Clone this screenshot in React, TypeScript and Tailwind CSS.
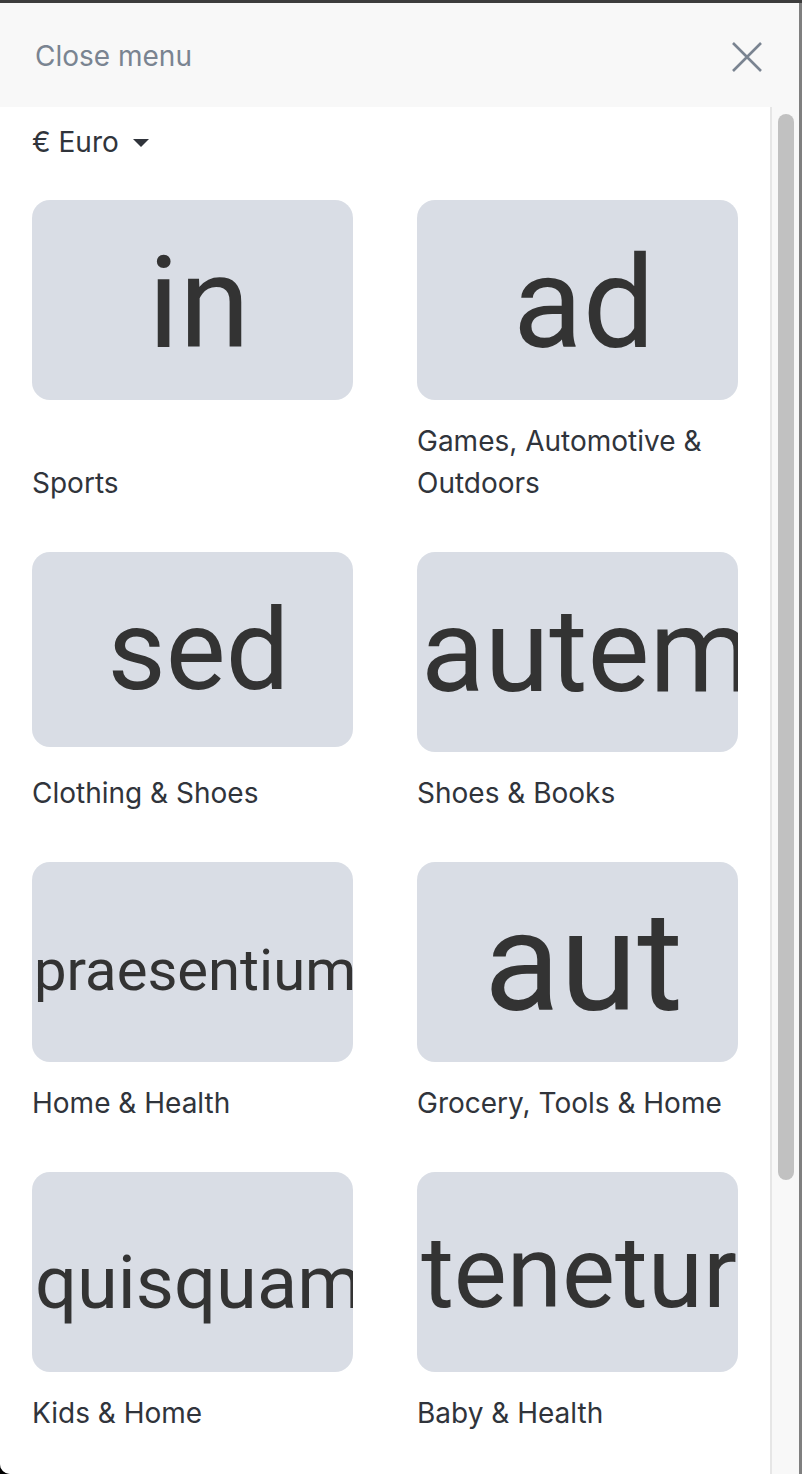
type Category = {
    word: string;
    label: string;
    size: string;
    height: string;
    // nudges the placeholder word the way the source images sit it
    offset: string;
};

const categories: Category[] = [
    { word: 'in', label: 'Sports', size: 'text-[128px]', height: 'h-[200px]', offset: 'pl-[13px] pt-[6px]' },
    { word: 'ad', label: 'Games, Automotive & Outdoors', size: 'text-[128px]', height: 'h-[200px]', offset: 'pl-[13px] pt-[6px]' },
    { word: 'sed', label: 'Clothing & Shoes', size: 'text-[113px]', height: 'h-[195px]', offset: 'pl-[12px] pt-[2px]' },
    { word: 'autem', label: 'Shoes & Books', size: 'text-[117px]', height: 'h-[200px]', offset: 'pl-[4px]' },
    { word: 'praesentium', label: 'Home & Health', size: 'text-[58px]', height: 'h-[200px]', offset: 'pl-[2px] pt-[16px]' },
    { word: 'aut', label: 'Grocery, Tools & Home', size: 'text-[140px]', height: 'h-[200px]', offset: 'pl-[12px]' },
    { word: 'quisquam', label: 'Kids & Home', size: 'text-[74px]', height: 'h-[200px]', offset: 'pl-[3px] pt-[20px]' },
    { word: 'tenetur', label: 'Baby & Health', size: 'text-[100px]', height: 'h-[200px]', offset: 'pl-[3px] pt-[2px]' },
];

function CategoryCard({ item }: { item: Category }) {
    return (
        <a href="#" className="flex flex-col justify-between">
            <div
                className={`${item.height} ${item.offset} w-full rounded-[18px] bg-[#d9dde5] overflow-hidden flex items-center [justify-content:safe_center] font-['Roboto',sans-serif] text-[#333333] whitespace-nowrap`}
            >
                <span className={item.size}>{item.word}</span>
            </div>
            <p className="pt-[20px] text-[28px] leading-[42px] text-[#30343b]">{item.label}</p>
        </a>
    );
}

export default function App() {
    return (
        <div className="w-[802px] h-[1474px] bg-black overflow-hidden">
            <div className="h-full flex flex-col bg-[#7f7f7f] pr-[3px] rounded-bl-[10px] overflow-hidden font-['Inter',sans-serif]">
                {/* window top edge */}
                <div className="h-[3px] bg-[#3d3d3d] -mr-[3px]" />

                {/* Header */}
                <div className="h-[104px] shrink-0 flex items-center justify-between bg-[#f8f8f8] pl-[35px] pr-[37px]">
                    <span className="text-[28px] text-[#7a8491] mt-[2px]">Close menu</span>
                    <button className="text-[#7a8491] mt-[3px]">
                        <svg width="30" height="30" viewBox="0 0 30 30" fill="none" stroke="currentColor" strokeWidth={2.6}>
                            <path d="M1 1l28 28M29 1L1 29" />
                        </svg>
                    </button>
                </div>

                <div className="flex-1 flex min-h-0">
                    {/* Content */}
                    <div className="flex-1 bg-white pl-[32px] pr-[32px] pt-[14px]">
                        <button className="flex items-center gap-[14px] h-[42px] text-[28px] text-[#30343b]">
                            <span>€ Euro</span>
                            <svg width="16" height="8" viewBox="0 0 16 8" className="mt-[1px]">
                                <path d="M0 0h16L8 8z" fill="#30343b" />
                            </svg>
                        </button>

                        <div className="mt-[37px] grid grid-cols-2 gap-x-[64px] gap-y-[48px]">
                            {categories.map(c => (
                                <CategoryCard key={c.word} item={c} />
                            ))}
                        </div>
                    </div>

                    {/* Scrollbar */}
                    <div className="w-[29px] shrink-0 bg-[#f8f8f8] border-l-2 border-[#e6e6e6] pt-[7px] pl-[6px]">
                        <div className="w-[16px] h-[1066px] rounded-full bg-[#c1c1c1]" />
                    </div>
                </div>
            </div>
        </div>
    );
}
